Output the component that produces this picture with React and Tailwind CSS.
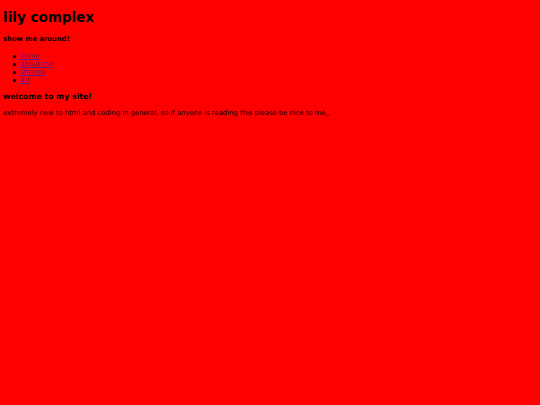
export default function App() {
  const links = ["home", "about me", "shrines", "art"];
  return (
    <div className="min-h-screen w-full bg-[#ff0000] text-black px-[3px] pt-[10px] font-['DejaVu_Sans',Verdana,sans-serif]">
      <h1 className="text-[13.5px] font-bold leading-[14px]">lily complex</h1>
      <h3 className="mt-[11px] text-[6.8px] font-bold leading-[8px]">show me around!</h3>
      <ul className="mt-[9px] pl-[10px] text-[6.8px] leading-[8px]">
        {links.map((l) => (
          <li key={l} className="flex items-center gap-[4px]">
            <span className="h-[3px] w-[3px] rounded-full bg-black" />
            <a href="#" className="text-[#551a8b] underline">
              {l}
            </a>
          </li>
        ))}
      </ul>
      <h3 className="mt-[8px] text-[7.8px] font-bold leading-[10px]">welcome to my site!</h3>
      <p className="mt-[7px] text-[6.8px] leading-[8px]">
        extremely new to html and coding in general, so if anyone is reading this please be nice to me,,
      </p>
    </div>
  );
}
